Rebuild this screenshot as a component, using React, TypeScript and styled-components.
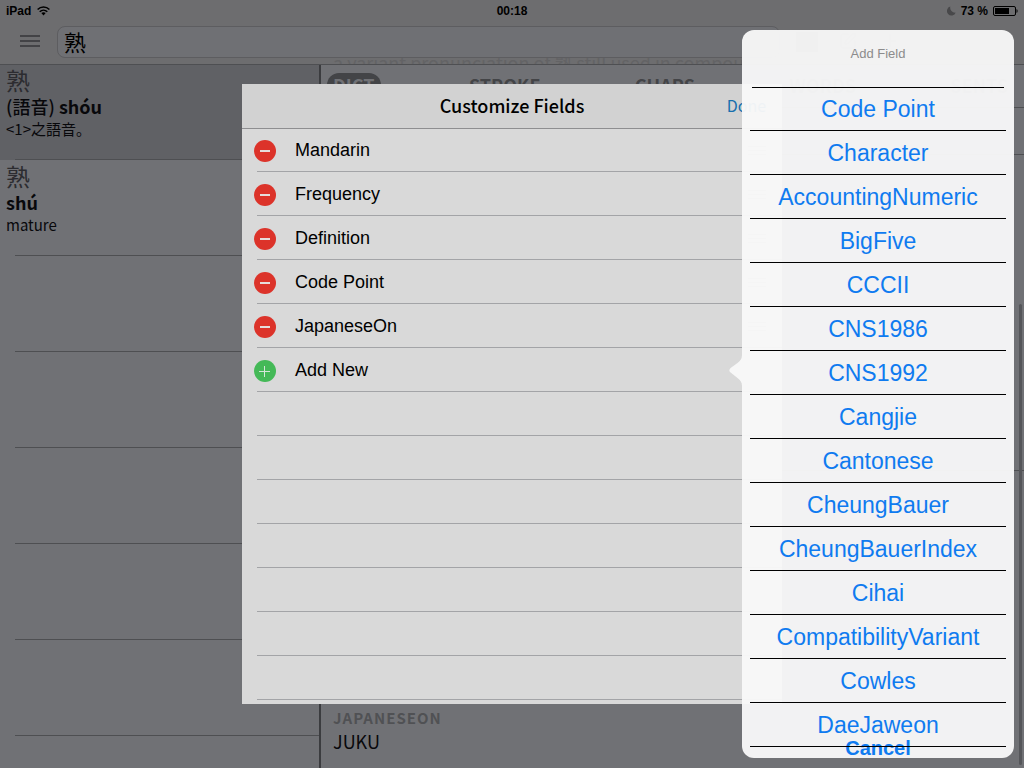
import React from "react";
import styled, { createGlobalStyle } from "styled-components";
import { Plus, SquarePen } from "lucide-react";

const sans = `"Liberation Sans", "Noto Sans CJK TC", sans-serif`;
const source = `"Noto Sans CJK JP", "Noto Sans", sans-serif`;
const line = "#4e4f52";

const GlobalStyle = createGlobalStyle`
  * { box-sizing: border-box; }
  body { margin: 0; background: #707175; font-family: ${source}; color: #08080b; }
  button { border: 0; padding: 0; margin: 0; background: none; font: inherit; color: inherit; cursor: pointer; }
  ul { list-style: none; margin: 0; padding: 0; }
  h2, h3, p { margin: 0; font-weight: 400; }
`;

const Screen = styled.div`
  position: relative;
  display: flex;
  flex-direction: column;
  height: 100vh;
  overflow: hidden;
`;

const TopBar = styled.header`
  position: relative;
  flex: none;
  height: 65px;
  background: #6d6d6f;
  border-bottom: 1px solid ${line};
`;

const StatusBar = styled.div`
  display: grid;
  grid-template-columns: 1fr auto 1fr;
  align-items: center;
  height: 22px;
  padding: 0 6px;
  font: bold 12px/22px ${sans};
  color: #000;
`;

const StatusGroup = styled.div<{ $end?: boolean }>`
  display: flex;
  align-items: center;
  justify-content: ${(p) => (p.$end ? "flex-end" : "flex-start")};
  gap: ${(p) => (p.$end ? "5px" : "6px")};
`;

const Toolbar = styled.div`
  display: flex;
  align-items: center;
  height: 40px;
  padding-left: 18px;
  color: #47474a;
`;

const IconButton = styled.button`
  display: flex;
  align-items: center;
  justify-content: center;
  width: 24px;
  height: 22px;
  margin-bottom: 2px;
`;

const SearchField = styled.input`
  flex: 1;
  min-width: 0;
  height: 32px;
  margin-left: 15px;
  padding: 0 6px 3px;
  border: 1px solid #5d5d60;
  border-radius: 8px;
  background: #6f7074;
  color: #000;
  font: 22px/28px ${source};
  outline: 0;
`;

const ToolbarActions = styled.div`
  display: flex;
  align-items: center;
  gap: 18px;
  width: 244px;
  padding-left: 16px;
`;

const TextButton = styled.button`
  width: 22px;
  height: 20px;
  background: #3f3f42;
`;

const ScrolledText = styled.p`
  position: absolute;
  left: 333px;
  top: 58px;
  height: 6px;
  overflow: hidden;
  font-size: 18px;
  line-height: 8px;
  color: #636365;
  white-space: nowrap;
`;

const Columns = styled.div`
  flex: 1;
  display: flex;
  min-height: 0;
`;

const Sidebar = styled.ul`
  flex: none;
  width: 321px;
  border-right: 2px solid #3b3c3f;
  overflow: hidden;
`;

const Result = styled.li<{ $selected?: boolean }>`
  height: 96px;
  padding: 2px 6px;
  background: linear-gradient(${line}, ${line}) 15px 100% / 100% 1px no-repeat
    ${(p) => (p.$selected ? "#606165" : "transparent")};
  &:first-child { height: 95px; padding-top: 1px; }
`;

const ResultGlyph = styled.p`
  font-size: 24px;
  line-height: 28px;
  color: #2c2c30;
`;

const ResultReading = styled.p`
  font-size: 18px;
  line-height: 25px;
  font-weight: 700;
`;

const ReadingNote = styled.span`
  font-weight: 500;
`;

const ResultMeaning = styled.p`
  font-size: 15px;
  line-height: 20px;
`;

const Detail = styled.main`
  position: relative;
  flex: 1;
  min-width: 0;
  display: flex;
  flex-direction: column;
`;

const Tabs = styled.nav`
  flex: none;
  display: flex;
  align-items: center;
  justify-content: space-between;
  height: 43px;
  padding: 0 10px 2px 6px;
  border-bottom: 1px solid ${line};
`;

const Tab = styled.button<{ $active?: boolean }>`
  height: 24px;
  padding: 0 6px;
  border-radius: 12px;
  font-size: 18px;
  line-height: 24px;
  font-weight: 700;
  color: ${(p) => (p.$active ? "#707175" : "#434447")};
  background: ${(p) => (p.$active ? "#434447" : "transparent")};
`;

const Section = styled.section<{ $grow?: boolean }>`
  flex: ${(p) => (p.$grow ? "0 0 316px" : "0 0 47px")};
  border-bottom: 1px solid ${line};
`;

const Entry = styled.section`
  margin-top: auto;
  height: 60px;
  padding-left: 12px;
`;

const EntryLabel = styled.h3`
  font-size: 15px;
  line-height: 20px;
  font-weight: 700;
  letter-spacing: 1px;
  color: #505154;
`;

const EntryValue = styled.p`
  font-size: 18px;
  line-height: 27px;
`;

const ScrollThumb = styled.div`
  position: absolute;
  right: 2px;
  top: 239px;
  bottom: 3px;
  width: 3px;
  border-radius: 2px;
  background: #55565a;
`;

const Overlay = styled.div`
  position: absolute;
  inset: 20px 0 0;
  display: flex;
  align-items: center;
  justify-content: center;
`;

const Dialog = styled.div`
  width: 540px;
  height: 620px;
  overflow: hidden;
  background: #d9d9d9;
  color: #000;
`;

const DialogHeader = styled.header`
  display: grid;
  grid-template-columns: 1fr auto 1fr;
  align-items: start;
  height: 44px;
  padding: 0 16px;
  background: #d2d2d2;
  box-shadow: 0 1px 0 #8e8e90;
`;

const DialogTitle = styled.h2`
  grid-column: 2;
  font-size: 18px;
  line-height: 42px;
  font-weight: 500;
`;

const DoneButton = styled.button`
  justify-self: end;
  font-size: 16px;
  line-height: 42px;
  color: #176fae;
`;

const FieldRow = styled.li`
  display: flex;
  align-items: center;
  gap: 19px;
  height: 44px;
  padding: 0 16px 0 12px;
  font: 18px/44px ${sans};
  background: linear-gradient(#a3a4a7, #a3a4a7) 15px 100% / 100% 1px no-repeat;
`;

const RoundButton = styled.button<{ $add?: boolean }>`
  display: flex;
  width: 22px;
  height: 22px;
  margin-top: 2px;
  border-radius: 50%;
  background: ${(p) => (p.$add ? "#44b957" : "#dc332a")};
`;

const Grip = styled.svg`
  margin-left: auto;
`;

const Popover = styled.div`
  position: absolute;
  top: 30px;
  right: 10px;
  bottom: 10px;
  width: 272px;
  border-radius: 12px;
  background: rgba(248, 248, 248, 0.96);
  font-family: ${sans};
`;

const PopoverArrow = styled.svg`
  position: absolute;
  left: -13px;
  top: 325px;
`;

const PopoverTitle = styled.h2`
  height: 58px;
  margin: 0 10px;
  border-bottom: 1px solid #000;
  font-size: 13px;
  line-height: 47px;
  text-align: center;
  color: #8c8c8c;
`;

const OptionList = styled.ul`
  position: relative;
  margin: 0 8px;
`;

const Option = styled.li`
  display: flex;
  align-items: flex-end;
  height: 44px;
  border-bottom: 1px solid #000;
  &:first-child { height: 43px; }
`;

const OptionButton = styled.button`
  width: 100%;
  height: 42px;
  font-size: 23px;
  line-height: 42px;
  color: #0f7bf0;
`;

const CancelButton = styled.button`
  position: absolute;
  left: 0;
  right: 0;
  bottom: 0;
  font-size: 20px;
  line-height: 20px;
  font-weight: 700;
  color: #0f7bf0;
`;

const fields = ["Mandarin", "Frequency", "Definition", "Code Point", "JapaneseOn"];
const blankFields = [0, 1, 2, 3, 4, 5, 6];
const blankResults = [0, 1, 2, 3, 4, 5];
const options = [
  "Code Point", "Character", "AccountingNumeric", "BigFive", "CCCII",
  "CNS1986", "CNS1992", "Cangjie", "Cantonese", "CheungBauer",
  "CheungBauerIndex", "Cihai", "CompatibilityVariant", "Cowles", "DaeJaweon",
];

function WifiIcon() {
  return (
    <svg width="13" height="10" viewBox="0 0 13 10" fill="none" stroke="#000" strokeWidth="1.5">
      <path d="M0.6 3.6C3.9 0.2 9.1 0.2 12.4 3.6" />
      <path d="M2.7 5.7C4.9 3.6 8.1 3.6 10.3 5.7" />
      <path d="M4.3 7.1C5.6 6 7.4 6 8.7 7.1L6.5 9.5Z" fill="#000" stroke="none" />
    </svg>
  );
}

function MoonIcon() {
  return (
    <svg width="9" height="10" viewBox="0 0 9 10">
      <path d="M3.3 0.5A5 5 0 0 0 8.8 6.6A4.6 4.6 0 1 1 3.3 0.5Z" fill="#48484a" />
    </svg>
  );
}

function BatteryIcon() {
  return (
    <svg width="25" height="10" viewBox="0 0 25 10">
      <rect x="0.5" y="0.5" width="22" height="9" rx="1.5" fill="none" stroke="#000" />
      <rect x="2" y="2" width="14" height="6" fill="#000" />
      <path d="M23.5 3C25 3.6 25 6.4 23.5 7Z" fill="#000" />
    </svg>
  );
}

function MenuIcon() {
  return (
    <svg width="20" height="12" viewBox="0 0 20 12" fill="#434346">
      <rect width="20" height="2" />
      <rect y="5" width="20" height="2" />
      <rect y="10" width="20" height="2" />
    </svg>
  );
}

export default function App() {
  return (
    <>
      <GlobalStyle />
      <Screen>
        <TopBar>
          <StatusBar>
            <StatusGroup>iPad <WifiIcon /></StatusGroup>
            <span>00:18</span>
            <StatusGroup $end><MoonIcon /><span>73 %</span><BatteryIcon /></StatusGroup>
          </StatusBar>
          <Toolbar>
            <IconButton aria-label="Menu"><MenuIcon /></IconButton>
            <SearchField aria-label="Search" defaultValue="熟" />
            <ToolbarActions>
              <TextButton aria-label="Characters" />
              <IconButton aria-label="Write"><SquarePen size={18} /></IconButton>
              <IconButton aria-label="Add"><Plus size={20} /></IconButton>
            </ToolbarActions>
          </Toolbar>
          <ScrolledText>a variant pronunciation of 熟 still used in compounds</ScrolledText>
        </TopBar>
        <Columns>
          <Sidebar>
            <Result $selected>
              <ResultGlyph>熟</ResultGlyph>
              <ResultReading><ReadingNote>(語音)</ReadingNote> shóu</ResultReading>
              <ResultMeaning>&lt;1&gt;之語音。</ResultMeaning>
            </Result>
            <Result>
              <ResultGlyph>熟</ResultGlyph>
              <ResultReading>shú</ResultReading>
              <ResultMeaning>mature</ResultMeaning>
            </Result>
            {blankResults.map((n) => <Result key={n} />)}
          </Sidebar>
          <Detail>
            <Tabs>
              <Tab $active>DICT</Tab>
              <Tab>STROKE</Tab>
              <Tab>CHARS</Tab>
              <Tab>WORDS</Tab>
              <Tab>SENTS</Tab>
            </Tabs>
            <Section />
            <Section $grow />
            <Entry>
              <EntryLabel>JAPANESEON</EntryLabel>
              <EntryValue>JUKU</EntryValue>
            </Entry>
            <ScrollThumb />
          </Detail>
        </Columns>
        <Overlay>
          <Dialog role="dialog" aria-label="Customize Fields">
            <DialogHeader>
              <DialogTitle>Customize Fields</DialogTitle>
              <DoneButton>Done</DoneButton>
            </DialogHeader>
            <ul>
              {fields.map((name) => (
                <FieldRow key={name}>
                  <RoundButton aria-label={`Remove ${name}`}>
                    <svg width="22" height="22" viewBox="0 0 22 22">
                      <rect x="6" y="10" width="10" height="2" fill="#e6dcdc" />
                    </svg>
                  </RoundButton>
                  {name}
                  <Grip width="18" height="9" viewBox="0 0 18 9" fill="#b4b4b6">
                    <rect width="18" height="1" />
                    <rect y="4" width="18" height="1" />
                    <rect y="8" width="18" height="1" />
                  </Grip>
                </FieldRow>
              ))}
              <FieldRow>
                <RoundButton $add aria-label="Add field">
                  <svg width="22" height="22" viewBox="0 0 22 22">
                    <path d="M5 11.5H16M10.5 6V17" stroke="#d5e6d8" />
                  </svg>
                </RoundButton>
                Add New
              </FieldRow>
              {blankFields.map((n) => <FieldRow key={n} />)}
            </ul>
          </Dialog>
        </Overlay>
        <Popover role="dialog" aria-label="Add Field">
          <PopoverArrow width="13" height="31" viewBox="0 0 13 31">
            <path d="M13 0C13 4 11 6 8.5 8L1.6 13Q-1 15.3 1.6 17.6L8.5 23C11 25 13 27 13 31Z" fill="rgba(248,248,248,0.96)" />
          </PopoverArrow>
          <CancelButton>Cancel</CancelButton>
          <PopoverTitle>Add Field</PopoverTitle>
          <OptionList>
            {options.map((name) => (
              <Option key={name}><OptionButton>{name}</OptionButton></Option>
            ))}
          </OptionList>
        </Popover>
      </Screen>
    </>
  );
}
